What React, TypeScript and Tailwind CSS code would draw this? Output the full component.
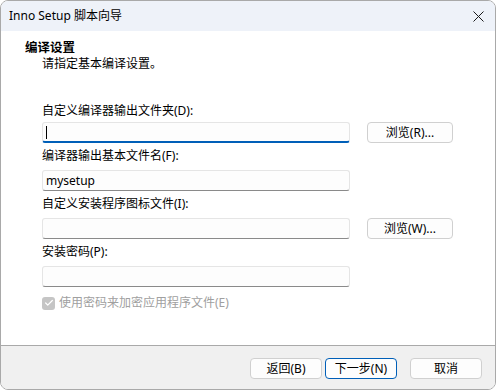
import { Check } from 'lucide-react';

const font = "font-['Noto_Sans','Noto_Sans_CJK_SC',sans-serif]";

function Field({
  label,
  value,
  focused,
  browse,
  tight,
}: {
  label: string;
  value?: string;
  focused?: boolean;
  browse?: string;
  tight?: boolean;
}) {
  return (
    <div className="flex flex-col">
      <div className="h-[16px] pl-[41px] text-[12px] leading-[16px] text-black">{label}</div>
      <div className={(tight ? 'mt-[3px]' : 'mt-[6px]') + ' flex items-start'}>
        <div
          className={
            'ml-[41px] flex h-[21px] w-[308px] items-center rounded-[3px] border border-[#e5e5e5] bg-[#fdfdfd] pl-[3px] text-[12px] text-black ' +
            (focused ? 'border-b-2 border-b-[#005fb8]' : 'border-b-[#8a8a8a]')
          }
        >
          {focused ? <span className="h-[13px] w-px bg-black" /> : value}
        </div>
        {browse ? (
          <button className="ml-[17px] flex h-[21px] w-[86px] items-center justify-center rounded-[4px] border border-[#d0d0d0] bg-[#fdfdfd] text-[12px] leading-none text-black">
            {browse}
          </button>
        ) : null}
      </div>
    </div>
  );
}

export default function App() {
  return (
    <div className={`h-[390px] w-[497px] bg-white ${font}`}>
      <div className="flex h-[390px] w-[496px] flex-col overflow-hidden rounded-[8px] border border-[#a9a9a9] bg-white">
        <div className="flex h-[30px] shrink-0 items-center justify-between bg-[#eef2f9] pl-[8px] pr-[10px]">
          <span className="text-[12px] leading-none text-black">Inno Setup 脚本向导</span>
          <svg width="11" height="11" viewBox="0 0 11 11" className="mr-[1px]">
            <path d="M0.5 0.5 L10.5 10.5 M10.5 0.5 L0.5 10.5" stroke="#1a1a1a" strokeWidth="1" fill="none" />
          </svg>
        </div>

        <div className="flex h-[314px] shrink-0 flex-col pt-[9px]">
          <div className="h-[16px] pl-[24px] text-[12.5px] font-bold leading-[16px] text-black">编译设置</div>
          <div className="h-[15px] pl-[41px] text-[12px] leading-[15px] text-black">请指定基本编译设置。</div>
          <div className="mt-[32px] flex flex-col gap-[5px]">
            <Field label="自定义编译器输出文件夹(D):" focused browse="浏览(R)..." tight />
            <Field label="编译器输出基本文件名(F):" value="mysetup" />
            <Field label="自定义安装程序图标文件(I):" browse="浏览(W)..." />
            <Field label="安装密码(P):" />
          </div>
          <div className="mt-[8px] flex items-center pl-[41px]">
            <span className="flex h-[13px] w-[13px] items-center justify-center rounded-[3px] bg-[#c5c5c5]">
              <Check size={10} strokeWidth={3} className="text-white" />
            </span>
            <span className="ml-[4px] text-[12px] leading-[16px] text-[#a0a0a0]">使用密码来加密应用程序文件(E)</span>
          </div>
        </div>

        <div className="flex flex-1 items-start justify-end border-t border-[#a9a9a9] bg-[#f0f0f0] pr-[13px] pt-[12px]">
          <button className="flex h-[21px] w-[72px] items-center justify-center rounded-[4px] border border-[#d0d0d0] bg-[#fdfdfd] text-[12px] leading-none text-black">
            返回(B)
          </button>
          <button className="ml-[3px] flex h-[21px] w-[72px] items-center justify-center rounded-[4px] border border-[#005fb8] bg-[#fdfdfd] text-[12px] leading-none text-black">
            下一步(N)
          </button>
          <button className="ml-[13px] flex h-[21px] w-[72px] items-center justify-center rounded-[4px] border border-[#d0d0d0] bg-[#fdfdfd] text-[12px] leading-none text-black">
            取消
          </button>
        </div>
      </div>
    </div>
  );
}
